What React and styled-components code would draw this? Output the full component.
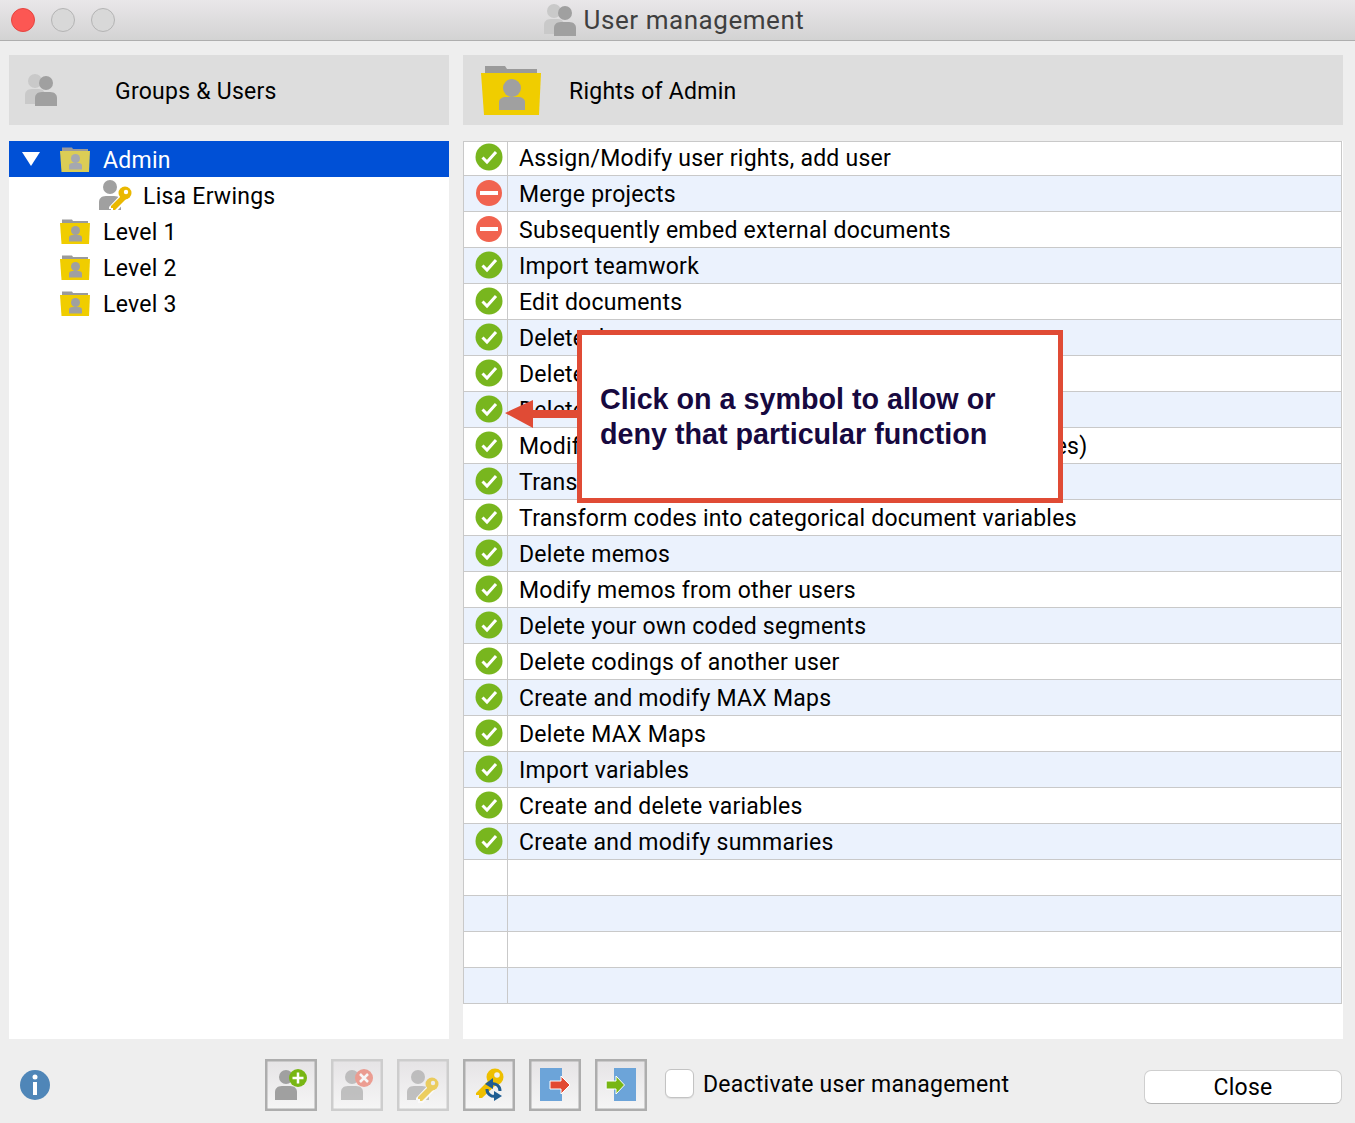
import React from 'react';
import styled, { createGlobalStyle } from 'styled-components';

const GlobalStyle = createGlobalStyle`
  html, body {
    margin: 0;
    padding: 0;
    background: #eeeeee;
  }
  * {
    box-sizing: border-box;
  }
`;

const FONT = `Roboto, "Liberation Sans", sans-serif`;

const Window = styled.div`
  width: 1355px;
  height: 1123px;
  overflow: hidden;
  display: flex;
  flex-direction: column;
  background: #eeeeee;
  font-family: ${FONT};
  font-size: 23px;
  letter-spacing: 0.25px;
  color: #000;
`;

const TitleBar = styled.div`
  height: 41px;
  display: grid;
  grid-template-columns: 1fr auto 1fr;
  align-items: center;
  padding: 0 18px 0 11px;
  background: linear-gradient(#e9e7e9, #d3d3d3);
  border-bottom: 1px solid #aeaeae;
`;

const Lights = styled.div`
  display: flex;
  gap: 16px;
`;

const Light = styled.span`
  width: 24px;
  height: 24px;
  border-radius: 50%;
  background: ${props => (props.$red ? '#fc5753' : '#d8d8d8')};
  border: 1px solid ${props => (props.$red ? '#e6443f' : '#b4b4b4')};
`;

const WindowTitle = styled.div`
  display: flex;
  align-items: center;
  gap: 8px;
  font-size: 26px;
  letter-spacing: 0.55px;
  color: #3f3f3f;
`;

const Columns = styled.div`
  flex: 1;
  display: grid;
  grid-template-columns: 440px 880px;
  grid-template-rows: 70px 898px;
  gap: 16px 14px;
  padding: 14px 0 0 9px;
`;

const PanelHeader = styled.div`
  display: flex;
  align-items: center;
  padding-left: ${props => props.$left}px;
  gap: ${props => props.$gap}px;
  background: #dddddd;
`;

// nudges text down a pixel so it sits like the native font does
const Caption = styled.span`
  padding-top: 2px;
`;

const Panel = styled.div`
  position: relative;
  background: #fff;
`;

const TreeRow = styled.div`
  height: 36px;
  display: flex;
  align-items: center;
  padding-left: ${props => props.$indent}px;
  gap: ${props => props.$gap || 13}px;
  background: ${props => (props.$selected ? '#0050d6' : 'transparent')};
  color: ${props => (props.$selected ? '#fff' : '#000')};
`;

const Triangle = styled.span`
  width: 0;
  height: 0;
  margin-right: 7px;
  border-left: 9px solid transparent;
  border-right: 9px solid transparent;
  border-top: 14px solid #fff;
`;

const RightsTable = styled.div`
  width: 879px;
  border-top: 1px solid #c9c9c9;
  border-left: 1px solid #c9c9c9;
  border-right: 1px solid #c9c9c9;
`;

const RightRow = styled.div`
  height: ${props => (props.$first ? 34 : 36)}px;
  display: grid;
  grid-template-columns: 44px 1fr;
  border-bottom: 1px solid #c9c9c9;
  background: ${props => (props.$even ? '#ebf2fd' : '#fff')};
`;

const SymbolCell = styled.div`
  display: flex;
  align-items: center;
  padding: 0 0 ${props => (props.$first ? 3 : 2)}px 11px;
  border-right: 1px solid #c9c9c9;
`;

const RightLabel = styled.div`
  display: flex;
  align-items: center;
  padding: ${props => (props.$first ? 0 : 2)}px 0 0 11px;
  white-space: nowrap;
`;

const Callout = styled.div`
  position: absolute;
  left: 114px;
  top: 189px;
  width: 486px;
  height: 173px;
  display: flex;
  align-items: center;
  padding: 0 0 0 18px;
  background: #fff;
  border: 5px solid #e04b35;
  font-family: "Liberation Sans", Arial, sans-serif;
  font-weight: 700;
  font-size: 28.7px;
  line-height: 35px;
  letter-spacing: 0;
  color: #17093f;
`;

const CalloutArrow = styled.svg`
  position: absolute;
  left: 42px;
  top: 258px;
`;

const Footer = styled.div`
  height: 84px;
  display: flex;
  align-items: flex-start;
  padding: 20px 0 0 20px;
`;

const InfoIcon = styled.svg`
  margin: 11px 215px 0 0;
  flex: none;
`;

const ToolGroup = styled.div`
  display: flex;
  gap: 14px;
`;

const ToolButton = styled.button`
  width: 52px;
  height: 52px;
  padding: 0;
  border: 0;
  background: linear-gradient(#e5e3e5, #f6f6f6);
  box-shadow: inset 0 0 0 2.5px ${props => (props.disabled ? '#cdcdcd' : '#adadad')};
  svg {
    display: block;
    opacity: ${props => (props.disabled ? 0.6 : 1)};
  }
`;

const DeactivateLabel = styled.label`
  display: flex;
  align-items: center;
  gap: 9px;
  margin: 10px 0 0 18px;
`;

const CheckBox = styled.span`
  width: 29px;
  height: 29px;
  background: #fff;
  border: 1px solid #c3c3c3;
  border-radius: 6px;
  box-shadow: 0 1px 1px rgba(0, 0, 0, 0.08);
`;

const CloseButton = styled.button`
  width: 198px;
  height: 34px;
  margin: 11px 13px 0 auto;
  padding: 0;
  background: #fff;
  border: 1px solid #cfcfcf;
  border-bottom-color: #b4b4b4;
  border-radius: 7px;
  font-family: ${FONT};
  font-size: 23px;
  letter-spacing: 0.25px;
  color: #000;
`;

const PersonShape = ({ x, y, fill }) => (
  <g fill={fill}>
    <circle cx={x + 11} cy={y} r="7" />
    <path d={`M${x} ${y + 23}v-8c0-3 2-6 7-6h8c5 0 7 3 7 6v8z`} />
  </g>
);

const UsersIcon = () => (
  <svg width="32" height="32" viewBox="0 0 32 32">
    <g fill="#c9c9c9">
      <circle cx="10" cy="7" r="7" />
      <path d="M0 30V21c0-3 2-6 7-6h7c4 0 6 3 6 6v9z" />
    </g>
    <PersonShape x={10} y={9} fill="#a0a0a0" />
  </svg>
);

const FolderIcon = ({ size = 30, selected }) => (
  <svg width={size} height={(size * 50) / 60} viewBox="0 0 60 50">
    <path d="M4 10V1h20l2 3h30v6z" fill="#9a9a9a" />
    <path d="M0 8h60l-2 42H3z" fill={selected ? '#dbcd55' : '#f0cd00'} />
    <g fill={selected ? '#a5a8b0' : '#a0a0a0'}>
      <circle cx="31" cy="23" r="9" />
      <path d="M18 45v-8c0-3 3-5 7-5h12c4 0 7 2 7 5v8z" />
    </g>
  </svg>
);

const KeyShape = ({ x, y, color, hole }) => (
  <g transform={`translate(${x} ${y})`}>
    <path d="M-1 21 13 6l6 6L6 26H1v-3h-2z" fill="#fff" />
    <path d="M1 20 14 7l4 4L5 24H3v-2H1z" fill={color} />
    <circle cx="15" cy="7" r="6.5" fill={color} />
    <circle cx="16" cy="6" r="2.2" fill={hole} />
  </g>
);

const UserKeyIcon = () => (
  <svg width="33" height="31" viewBox="0 0 33 31">
    <PersonShape x={0} y={7} fill="#a0a0a0" />
    <KeyShape x={11} y={6} color="#eab800" hole="#fff" />
  </svg>
);

const AllowIcon = () => (
  <svg width="28" height="28" viewBox="0 0 28 28">
    <circle cx="14" cy="14" r="13.5" fill="#78b61e" />
    <path d="M7.5 14.5l4.5 4.5 9-10" stroke="#fff" strokeWidth="3" fill="none" />
  </svg>
);

const DenyIcon = () => (
  <svg width="28" height="28" viewBox="0 0 28 28">
    <circle cx="14" cy="14" r="13" fill="#f1634f" />
    <rect x="5" y="12" width="18" height="4" fill="#fff" />
  </svg>
);

const AddUserIcon = () => (
  <svg width="52" height="52" viewBox="0 0 52 52">
    <PersonShape x={10} y={18} fill="#a0a0a0" />
    <circle cx="33" cy="19" r="9" fill="#78b614" />
    <path d="M33 13.500v11M27.500 19h11" stroke="#fff" strokeWidth="2.500" />
  </svg>
);

const RemoveUserIcon = () => (
  <svg width="52" height="52" viewBox="0 0 52 52">
    <PersonShape x={10} y={18} fill="#a0a0a0" />
    <circle cx="33" cy="19" r="9" fill="#ec6a57" />
    <path d="M29 15l8 8M37 15l-8 8" stroke="#fff" strokeWidth="2.500" />
  </svg>
);

const PasswordIcon = () => (
  <svg width="52" height="52" viewBox="0 0 52 52">
    <PersonShape x={10} y={18} fill="#a0a0a0" />
    <KeyShape x={20} y={18} color="#eab800" hole="#eee" />
  </svg>
);

const ResetKeyIcon = () => (
  <svg width="52" height="52" viewBox="0 0 52 52">
    <path d="M13 34l15-15 6 6-15 14h-3v-3h-3z" fill="#eebf00" />
    <circle cx="32" cy="18" r="8.500" fill="#eebf00" />
    <circle cx="34" cy="16" r="2.800" fill="#f0f0f0" />
    <g stroke="#1f5d92" strokeWidth="3" fill="none">
      <path d="M37 32a7 7 0 0 0-9-7" />
      <path d="M24 30a7 7 0 0 0 9 7" />
    </g>
    <path d="M30 19l-8 6 8 5zM31 32l8 5-8 5z" fill="#1f5d92" />
  </svg>
);

const ExportIcon = () => (
  <svg width="52" height="52" viewBox="0 0 52 52">
    <rect x="11" y="9" width="22" height="33" fill="#6ca4d9" />
    <path d="M21 22h11v-5l9 9-9 9v-5H21z" fill="#e24a32" stroke="#fff" strokeWidth="1" />
  </svg>
);

const ImportIcon = () => (
  <svg width="52" height="52" viewBox="0 0 52 52">
    <rect x="19" y="9" width="22" height="33" fill="#6ca4d9" />
    <path d="M11 22h10v-5l8.500 9-8.500 9v-5H11z" fill="#78b614" stroke="#fff" strokeWidth="1" />
    <path d="M11 21.500v9" stroke="#e9eef4" strokeWidth="1" />
  </svg>
);

const rights = [
  ['Assign/Modify user rights, add user', true],
  ['Merge projects', false],
  ['Subsequently embed external documents', false],
  ['Import teamwork', true],
  ['Edit documents', true],
  ['Delete documents', true],
  ['Delete document groups', true],
  ['Delete document sets', true],
  ['Modify document variables (add and update variables)', true],
  ['Transform variables into codes', true],
  ['Transform codes into categorical document variables', true],
  ['Delete memos', true],
  ['Modify memos from other users', true],
  ['Delete your own coded segments', true],
  ['Delete codings of another user', true],
  ['Create and modify MAX Maps', true],
  ['Delete MAX Maps', true],
  ['Import variables', true],
  ['Create and delete variables', true],
  ['Create and modify summaries', true],
  ['', null],
  ['', null],
  ['', null],
  ['', null],
];

export default function App() {
  return (
    <Window>
      <GlobalStyle />
      <TitleBar>
        <Lights>
          <Light $red />
          <Light />
          <Light />
        </Lights>
        <WindowTitle>
          <UsersIcon />
          User management
        </WindowTitle>
      </TitleBar>

      <Columns>
        <PanelHeader $left={16} $gap={58}>
          <UsersIcon />
          <Caption>Groups &amp; Users</Caption>
        </PanelHeader>
        <PanelHeader $left={18} $gap={28}>
          <FolderIcon size={60} />
          <Caption>Rights of Admin</Caption>
        </PanelHeader>

        <Panel>
          <TreeRow $selected $indent={13}>
            <Triangle />
            <FolderIcon selected />
            <Caption>Admin</Caption>
          </TreeRow>
          <TreeRow $indent={90} $gap={11}>
            <UserKeyIcon />
            <Caption>Lisa Erwings</Caption>
          </TreeRow>
          {['Level 1', 'Level 2', 'Level 3'].map(level => (
            <TreeRow key={level} $indent={51}>
              <FolderIcon />
              <Caption>{level}</Caption>
            </TreeRow>
          ))}
        </Panel>

        <Panel>
          <RightsTable>
            {rights.map(([label, allowed], i) => (
              <RightRow key={i} $first={i === 0} $even={i % 2 === 1}>
                <SymbolCell $first={i === 0}>
                  {allowed === true && <AllowIcon />}
                  {allowed === false && <DenyIcon />}
                </SymbolCell>
                <RightLabel $first={i === 0}>{label}</RightLabel>
              </RightRow>
            ))}
          </RightsTable>
          <CalloutArrow width="74" height="30" viewBox="0 0 74 30">
            <path d="M0 14 28 1v10h46v8H28v10z" fill="#e04b35" />
          </CalloutArrow>
          <Callout>
            <div>
              Click on a symbol to allow or
              <br />
              deny that particular function
            </div>
          </Callout>
        </Panel>
      </Columns>

      <Footer>
        <InfoIcon width="30" height="30" viewBox="0 0 30 30">
          <circle cx="15" cy="15" r="15" fill="#4f86b8" />
          <circle cx="15" cy="7" r="2.500" fill="#fff" />
          <rect x="13" y="12" width="4" height="13" fill="#fff" />
        </InfoIcon>
        <ToolGroup>
          <ToolButton><AddUserIcon /></ToolButton>
          <ToolButton disabled><RemoveUserIcon /></ToolButton>
          <ToolButton disabled><PasswordIcon /></ToolButton>
          <ToolButton><ResetKeyIcon /></ToolButton>
          <ToolButton><ExportIcon /></ToolButton>
          <ToolButton><ImportIcon /></ToolButton>
        </ToolGroup>
        <DeactivateLabel>
          <CheckBox />
          <Caption>Deactivate user management</Caption>
        </DeactivateLabel>
        <CloseButton>Close</CloseButton>
      </Footer>
    </Window>
  );
}
